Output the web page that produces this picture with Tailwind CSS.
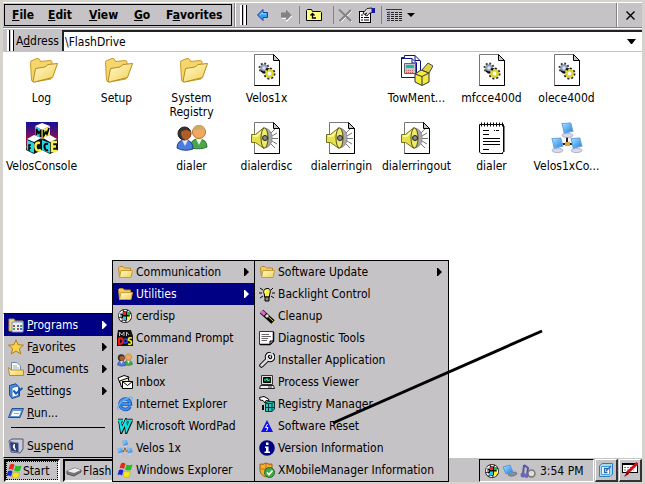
<!DOCTYPE html>
<html lang="en">
<head>
<meta charset="utf-8">
<title>\FlashDrive</title>
<script src="https://cdn.jsdelivr.net/npm/@tailwindcss/browser@4"></script>
</head>
<body class="h-screen overflow-hidden bg-[#d6d3ce] font-['DejaVu_Sans_Condensed','DejaVu_Sans',sans-serif] text-[12px] leading-[14px] text-black">

<svg class="absolute size-0" aria-hidden="true">
  <defs>
    <linearGradient id="gFold" x1="0" y1="0" x2="1" y2="1"><stop offset="0" stop-color="#fffbd0"/><stop offset="1" stop-color="#f3cf52"/></linearGradient>
    <linearGradient id="gScr" x1="0" y1="0" x2="1" y2="1"><stop offset="0" stop-color="#a8e4ff"/><stop offset="1" stop-color="#1f7ae0"/></linearGradient>
    <linearGradient id="gSky" x1="0" y1="0" x2="0" y2="1"><stop offset="0" stop-color="#10109c"/><stop offset="1" stop-color="#c0102c"/></linearGradient>
    <symbol id="folder" viewBox="0 0 32 32">
      <path d="M4.500 8.500Q4.500 6.500 6 6.500L11 4.500Q13 4 14 6L14.500 7.500L24 6.500Q26 6.500 26 8.500V11L25 25L8 28Q6 28 5.500 26Z" fill="#f4d66c" stroke="#c99a28"/>
      <path d="M7 27.500L9.500 14.500L19 13L22 10.500L31.500 9.500L26.500 23.500L8.500 28Z" fill="url(#gFold)" stroke="#b98a1c"/>
    </symbol>
    <symbol id="sfolder" viewBox="0 0 16 16">
      <path d="M1.500 3.500L2.500 2.500H6L7.500 4H13.500V13.500H2.500Z" fill="#f0cd62" stroke="#b98a28"/>
      <path d="M2.500 13.500L4 6.500H15.500L14 13.500Z" fill="url(#gFold)" stroke="#c89c38"/>
    </symbol>
    <symbol id="page" viewBox="0 0 32 32">
      <path d="M3.500 .5H22.500L28.500 6.500V31.500H3.500Z" fill="#fff" stroke="#777"/>
      <path d="M28.500 6.500V31.500H3.500" fill="none" stroke="#000"/>
      <path d="M22.500 .5V6.500H28.500Z" fill="#c8c8c8" stroke="#000"/>
    </symbol>
    <symbol id="gears" viewBox="0 0 32 32">
      <use href="#page"/>
      <circle cx="13" cy="14" r="4" fill="#dfe6f2" stroke="#333" stroke-width="3" stroke-dasharray="1.600 1.500"/>
      <circle cx="13" cy="14" r="2.800" fill="#dde4f4" stroke="#8f9cb4" stroke-width="2"/>
      <circle cx="18.500" cy="19.500" r="4.500" fill="#f1ea50" stroke="#222" stroke-width="3" stroke-dasharray="1.800 1.700"/>
      <circle cx="18.500" cy="19.500" r="3.200" fill="#fff" stroke="#ded42c" stroke-width="2.500"/>
      <path d="M10 17L14 19M15 15L17 16" stroke="#111" stroke-width="1.500"/>
    </symbol>
    <symbol id="sound" viewBox="0 0 32 32">
      <use href="#page"/>
      <path d="M20 11L24 7M21 14L26 11M21 16.500H27M21 19L26 22M20 22L24 26" stroke="#777"/>
      <path d="M14 6Q21 8 21 16T14 26Q17 22 17 16T14 6" fill="#aaa" stroke="#888"/>
      <path d="M.5 12.500H4.500L13 5.500V26.500L4.500 20.500H.5Z" fill="#e6e04a" stroke="#77731a"/>
      <path d="M2 14H6L11 9" fill="none" stroke="#fffcb8" stroke-width="1.500"/>
      <ellipse cx="13.500" cy="16" rx="3.500" ry="10" fill="#efe970" stroke="#55521a"/>
      <circle cx="14" cy="16" r="2.500" fill="#888" stroke="#222"/>
    </symbol>
    <symbol id="people" viewBox="0 0 32 32">
      <path d="M15 26Q14 17 22 17Q31 17 31 25Q25 28 15 26Z" fill="#4ca64a" stroke="#2b7430"/>
      <path d="M20 17L23 23L26 17Z" fill="#e8f4e8"/>
      <circle cx="23" cy="10" r="6.500" fill="#f0a860" stroke="#b8742c"/>
      <path d="M16.500 9Q17 3 23 3T29.500 9Q25 5 16.500 9Z" fill="#d0aa62"/>
      <path d="M1 26Q1 18 9 18T17 27Q8 30 1 26Z" fill="#4b7ddf" stroke="#243f94"/>
      <path d="M6 18L9 24L12 18Z" fill="#e3ecfa"/>
      <circle cx="8.500" cy="11.500" r="6.500" fill="#39322f" stroke="#1e1c20"/>
      <path d="M5 10Q10 6 15 10Q15 18 10 18Q5 17 5 10Z" fill="#b05c26"/>
    </symbol>
    <symbol id="mon" viewBox="0 0 12 14">
      <ellipse cx="6" cy="12" rx="5" ry="2" fill="#d8d8ea" stroke="#8f92b4" stroke-width=".6"/>
      <path d="M1 1L9 .5L11 8L3 10Z" fill="url(#gScr)" stroke="#6aa4dc"/>
    </symbol>
    <symbol id="net" viewBox="0 0 32 32">
      <path d="M16 14V22M9 22H24" stroke="#222" stroke-width="2"/>
      <rect x="14" y="20" width="5" height="4" fill="#e3a238"/>
      <use href="#mon" x="10" y="0" width="13" height="16"/>
      <use href="#mon" x="0" y="15" width="13" height="16"/>
      <use href="#mon" x="19" y="15" width="13" height="16"/>
    </symbol>
    <symbol id="ce" viewBox="0 0 16 16">
      <circle cx="8" cy="8" r="7" fill="#111"/>
      <circle cx="8" cy="8" r="5.500" fill="none" stroke="#f4f4f4" stroke-width="1.500" stroke-dasharray="3 1"/>
      <path d="M2 5H6M2 8H5M3 11H6" stroke="#fff"/>
      <path d="M6 4H9V7H6Z" fill="#e22"/><path d="M10 4H13V7H10Z" fill="#2b3"/><path d="M6 8.500H9V12H6Z" fill="#2ce"/><path d="M10 8.500H13V12H10Z" fill="#fe2"/>
    </symbol>
    <symbol id="flag" viewBox="0 0 16 16">
      <path d="M4 1.500Q7 0 8.500 2L7 7Q5 5.500 2.500 6.500Z" fill="#e8291c"/>
      <path d="M9.500 2.500Q12 4 15.500 2.500L14 8Q11 9 8 7.500Z" fill="#24c01e"/>
      <path d="M2 8Q5 7 6.500 8.500L5 13.500Q3 12 .5 13Z" fill="#1a27d8"/>
      <path d="M7.500 9Q10 10.500 13.500 9.500L12 15Q9 16 6 14Z" fill="#f6e81a" stroke="#a49a10" stroke-width=".4"/>
    </symbol>
    <symbol id="caret" viewBox="0 0 5 8"><path d="M0 0H1L5 4L1 8H0Z" fill="currentColor"/></symbol>
    <symbol id="down" viewBox="0 0 8 4"><path d="M0 0H8L4 4Z" fill="#000"/></symbol>
  </defs>
</svg>

<div class="relative flex h-full flex-col pt-[2px] pr-[3px] pb-[2px] pl-[3px]">

  <header class="shrink-0 bg-[#c6c3c6]">
    <div class="flex h-[26px] items-stretch border-t border-b border-t-white border-b-[#848284]">
      <nav class="my-px ml-px flex w-[228px] items-center border border-black pl-[3px] text-[12px] font-bold" aria-label="Menu bar">
        <button class="w-[36px] pl-[4px] text-left"><u>F</u>ile</button>
        <button class="w-[41px] pl-[4px] text-left"><u>E</u>dit</button>
        <button class="w-[45px] pl-[4px] text-left"><u>V</u>iew</button>
        <button class="w-[32px] pl-[4px] text-left"><u>G</u>o</button>
        <button class="w-[65px] pl-[4px] text-left">F<u>a</u>vorites</button>
      </nav>
      <div class="ml-[2px] w-[2px] border-r border-l border-r-white border-l-[#848284]"></div>
      <div class="my-[2px] ml-[4px] flex gap-px" aria-hidden="true">
        <i class="w-[3px] border-r border-black bg-white"></i><i class="w-[3px] border-r border-black bg-white"></i>
      </div>
      <div class="flex items-center pl-[4px]">
        <button class="grid w-[23px] place-items-center" aria-label="Back">
          <svg class="size-[14px]" viewBox="0 0 14 14"><path d="M1.500 7L7 1.500V4.500H11.500V9.500H7V12.500Z" fill="#31a2f0" stroke="#1c3fae"/><path d="M4 7L6.500 4.500V6H10" fill="none" stroke="#8edaff"/></svg>
        </button>
        <button class="grid w-[23px] place-items-center" aria-label="Forward">
          <svg class="size-[14px]" viewBox="0 0 14 14"><path d="M13 8L7.500 13.500V10.500H3" fill="none" stroke="#fff"/><path d="M12.500 7L7 1.500V4.500H2V9.500H7V12.500Z" fill="#848284"/></svg>
        </button>
        <i class="mx-[2px] h-[18px] w-px bg-[#848284]"></i>
        <button class="grid w-[23px] place-items-center" aria-label="Up one level">
          <svg class="h-[14px] w-[16px]" viewBox="0 0 16 14"><path d="M.5 12.500V2.500L1.500 1.500H5.500L6.500 3.500H14.500L15.500 4.500V12.500Z" fill="#ffff84" stroke="#000"/><path d="M10 10H6.500V6M4.500 7.500L6.500 5.500L8.500 7.500" fill="none" stroke="#000" stroke-width="1.300"/></svg>
        </button>
        <i class="mr-px ml-[8px] h-[18px] w-px bg-[#848284]"></i>
        <button class="grid w-[21px] place-items-center" aria-label="Delete">
          <svg class="size-[15px]" viewBox="0 0 15 15"><path d="M2 3L14 14M3 14L14 3" stroke="#fff"/><path d="M1 1.500L13 13M1.500 13L13 2" stroke="#848284" stroke-width="1.800"/></svg>
        </button>
        <button class="grid w-[21px] place-items-center" aria-label="Properties">
          <svg class="size-[16px]" viewBox="0 0 16 16"><rect x=".5" y="4.500" width="11" height="11" fill="#fff" stroke="#000"/><path d="M2 10.500H4M5 10.500H10M2 13H4M5 13H10M2 8H4" stroke="#000"/><path d="M4 6L8 1.500L13 1V5.500L10 6.500L8 9L6 8L8 6L5 7.500Z" fill="#d8d8d8" stroke="#222"/><path d="M13 1H16V6H13Z" fill="#1818a8"/></svg>
        </button>
        <i class="mx-[4px] h-[18px] w-px bg-[#848284]"></i>
        <button class="flex items-center gap-[4px]" aria-label="View style">
          <svg class="h-[14px] w-[17px]" viewBox="0 0 17 14"><path d="M0 1.500H16" stroke="#2a2a94"/><path d="M1 4.500H16M1 6.500H16M1 8.500H16M1 10.500H16M1 12.500H16" stroke="#222" stroke-dasharray="3 1"/><path d="M3 3V13" stroke="#6a6aae"/></svg>
          <svg class="h-[4px] w-[8px]"><use href="#down"/></svg>
        </button>
      </div>
      <button class="ml-auto grid w-[25px] place-items-center border-l border-white shadow-[-1px_0_0_#848284]" aria-label="Close">
        <svg class="size-[9px]" viewBox="0 0 9 9"><path d="M.5 .5L8.500 8.500M8.500 .5L.5 8.500" stroke="#000" stroke-width="1.400"/></svg>
      </button>
    </div>
    <div class="flex h-[23px] items-stretch border-t border-white pt-px">
      <div class="ml-[4px] flex gap-px" aria-hidden="true">
        <i class="w-[3px] border-r border-black bg-white"></i><i class="w-[3px] border-r border-black bg-white"></i>
      </div>
      <label for="address" class="flex w-[48px] items-center pl-[2px]"><span>A<u>d</u>dress</span></label>
      <div class="flex flex-1 border-t-2 border-l-2 border-[#222] bg-white">
        <input id="address" type="text" value="\FlashDrive" class="min-w-0 flex-1 bg-white pl-px outline-none">
        <button class="grid w-[22px] place-items-center" aria-label="Address history"><svg class="h-[5px] w-[9px]" viewBox="0 0 9 5"><path d="M0 0H9L5 5H4Z" fill="#000"/></svg></button>
      </div>
    </div>
    <div class="h-px bg-[#c6c3c6]"></div>
  </header>

  <main class="grid min-h-0 flex-1 auto-rows-[68px] grid-cols-[repeat(auto-fill,75px)] content-start bg-white pt-[2px] pl-px">
    <a href="#" class="flex flex-col items-center gap-[5px] text-center"><svg class="size-8 shrink-0"><use href="#folder"/></svg>Log</a>
    <a href="#" class="flex flex-col items-center gap-[5px] text-center"><svg class="size-8 shrink-0"><use href="#folder"/></svg>Setup</a>
    <a href="#" class="flex flex-col items-center gap-[5px] text-center"><svg class="size-8 shrink-0"><use href="#folder"/></svg><span>System<br>Registry</span></a>
    <a href="#" class="flex flex-col items-center gap-[5px] text-center"><svg class="size-8 shrink-0"><use href="#gears"/></svg>Velos1x</a>
    <a href="#" class="col-start-6 flex flex-col items-center gap-[5px] text-center">
      <svg class="size-8 shrink-0" viewBox="0 0 32 32"><path d="M3.500 1.500H14L19.500 7V23.500H0.500V3.500H3.500Z" fill="#fff" stroke="#10108c"/><path d="M.5 4.500H11L15.500 9V23.500M11 4.500V9H15.500M14 1.500V6.500H19" fill="none" stroke="#10108c"/><path d="M3.500 9.500H14.500V19.500H3.500Z" fill="#c8c8c8" stroke="#666"/><path d="M5 11H13V14H5Z" fill="#18b8b0"/><path d="M5 16.500H13M5 18.500H13" stroke="#c66" stroke-dasharray="1 1"/><path d="M14 20L20 16L28 19V28L21 31.500L14 28Z" fill="#f2ea3c" stroke="#333"/><path d="M14 20L21 22.500V31M21 22.500L28 19" fill="none" stroke="#333"/><path d="M21 16L27 9L32 12L28 19Z" fill="#dcd440" stroke="#444"/></svg>TowMent...</a>
    <a href="#" class="flex flex-col items-center gap-[5px] text-center"><svg class="size-8 shrink-0"><use href="#gears"/></svg>mfcce400d</a>
    <a href="#" class="flex flex-col items-center gap-[5px] text-center"><svg class="size-8 shrink-0"><use href="#gears"/></svg>olece400d</a>
    <a href="#" class="col-start-1 flex flex-col items-center gap-[5px] text-center">
      <svg class="size-8 shrink-0" viewBox="0 0 32 32"><path d="M0 0H32V24H0Z" fill="url(#gSky)"/><path d="M1 19L9 14L16 18L24 14L32 19V28L24 32L16 28L8 32L0 28Z" fill="#111"/><path d="M9 4L16 1L24 4L16 8Z" fill="#fff"/><path d="M9 4L16 8V17L9 13Z" fill="#20d8e8"/><path d="M24 4L16 8V17L24 13Z" fill="#f6f04c"/><path d="M10.500 13V7L12.500 11L14.500 9V15M17.500 8V14L20 10L21 12L23 6" fill="none" stroke="#000" stroke-width="1.700"/><path d="M1 17L8 13L15 16L8 20ZM17 16L24 13L31 17L24 20Z" fill="#fff"/><path d="M1 18L8 21V31L1 28Z" fill="#20d8e8"/><path d="M16 18L24 21V31L16 28Z" fill="#20d8e8"/><path d="M5 23H3V29M3 26H5" fill="none" stroke="#000" stroke-width="1.500"/><path d="M14 21Q9 20 9.500 25T15 28" fill="none" stroke="#f6f04c" stroke-width="2.500"/><path d="M22 22Q18 21 18.500 25T22 28" fill="none" stroke="#000" stroke-width="2"/><path d="M31 20H26V29H31M26 24.500H30" fill="none" stroke="#f6f04c" stroke-width="2.500"/></svg>VelosConsole</a>
    <a href="#" class="col-start-3 flex flex-col items-center gap-[5px] text-center"><svg class="size-8 shrink-0"><use href="#people"/></svg>dialer</a>
    <a href="#" class="flex flex-col items-center gap-[5px] text-center"><svg class="size-8 shrink-0"><use href="#sound"/></svg>dialerdisc</a>
    <a href="#" class="flex flex-col items-center gap-[5px] text-center"><svg class="size-8 shrink-0"><use href="#sound"/></svg>dialerringin</a>
    <a href="#" class="flex flex-col items-center gap-[5px] text-center"><svg class="size-8 shrink-0"><use href="#sound"/></svg>dialerringout</a>
    <a href="#" class="flex flex-col items-center gap-[5px] text-center">
      <svg class="size-8 shrink-0" viewBox="0 0 32 32"><path d="M3.500 2.500H27.500V29.500L26 31.500H5L3.500 30Z" fill="#fff" stroke="#000"/><path d="M28 4V30M6 31.500H27" stroke="#000"/><path d="M5 2.500H27" stroke="#000" stroke-width="4" stroke-dasharray="1 2"/><path d="M7 8.500H13M18 8.500H19M20 8.500H23M7 12.500H13M7 16.500H24M7 19.500H24M7 22.500H24M7 27.500H13" stroke="#000"/></svg>dialer</a>
    <a href="#" class="flex flex-col items-center gap-[5px] text-center"><svg class="size-8 shrink-0"><use href="#net"/></svg>Velos1xCo...</a>
  </main>

  <footer class="flex h-[24px] shrink-0 items-stretch bg-[#c6c3c6] pt-px pl-px">
    <button class="flex w-[56px] items-center gap-px border-2 border-t-black border-r-white border-b-white border-l-black outline-1 -outline-offset-3 outline-dotted outline-black"><svg class="size-4 shrink-0"><use href="#flag"/></svg>Start</button>
    <button class="ml-[3px] flex w-[50px] items-center gap-px overflow-hidden border-2 border-r-0 border-t-black border-b-white border-l-black pl-px" title="FlashDrive">
      <svg class="size-4 shrink-0" viewBox="0 0 16 16"><path d="M1 8L9 5L15 7V9L8 13L1 11Z" fill="#777" stroke="#555"/><path d="M1 8L9 5L15 7L8 10Z" fill="#eee"/></svg><span class="min-w-0 flex-1 overflow-hidden text-left">FlashDrive</span></button>
    <div class="ml-auto flex w-[115px] items-center gap-[2px] border border-t-black border-r-white border-b-white border-l-black pl-[4px]">
      <svg class="size-4 shrink-0"><use href="#ce"/></svg>
      <svg class="size-4 shrink-0" viewBox="0 0 16 16"><path d="M6 12Q10 15 15 11L14 9L7 10Z" fill="#8c8ca0" stroke="#5c5c74" stroke-width=".6"/><path d="M1 4L8 2L11 9L4 11Z" fill="url(#gScr)" stroke="#5a9ad8"/></svg>
      <svg class="size-4 shrink-0" viewBox="0 0 16 16"><path d="M4 2L8 5L7 12M4 2L3 11" fill="none" stroke="#5858a8" stroke-width="2"/><circle cx="3" cy="12" r="2.500" fill="#6868b8"/><circle cx="11.500" cy="10.500" r="3.500" fill="#ddd" stroke="#777" stroke-width="1.500"/><circle cx="6.500" cy="13" r="2" fill="#6868b8"/></svg>
      <time class="ml-[2px]">3:54 PM</time>
    </div>
    <button class="ml-px grid w-[23px] place-items-center border-t border-r-2 border-b-2 border-l border-t-white border-r-[#333] border-b-[#333] border-l-white" aria-label="Desktop">
      <svg class="size-4" viewBox="0 0 16 16"><path d="M4 1.500H14.500V12L12 14.500H1.500V4Z" fill="#a4dcf8" stroke="#2c7cb8"/><path d="M3.500 4.500H11.500V12.500H3.500Z" fill="#fff" stroke="#4c9cd0"/><path d="M10 6.500H6.500V10.500H9.500M8 9L13 4" fill="none" stroke="#2c68a8" stroke-width="1.300"/></svg>
    </button>
    <button class="ml-px grid w-[23px] place-items-center border-t border-r-2 border-b-2 border-l border-t-white border-r-[#333] border-b-[#333] border-l-white" aria-label="Input panel">
      <svg class="size-4" viewBox="0 0 16 16"><rect x=".5" y="1.500" width="15" height="9" fill="#fff" stroke="#000"/><path d="M0 2H16" stroke="#000" stroke-width="2"/><path d="M2 5.500H14M2 8H12" stroke="#777" stroke-dasharray="2 1"/><path d="M15.500 1L5 11" stroke="#d01018" stroke-width="3"/><path d="M5.500 9L2 15L7 12Z" fill="#800810"/></svg>
    </button>
  </footer>

  <!-- Start menu -->
  <div class="absolute bottom-[26px] left-[3px] w-[110px] border border-black border-l-white bg-[#c6c3c6]" role="menu" aria-label="Start">
    <button class="flex h-[22px] w-full items-center gap-[3px] bg-[#000084] pr-[5px] pl-[4px] text-white" role="menuitem"><svg class="size-4 shrink-0" viewBox="0 0 16 16"><path d="M1 2H6L7 4H15V14H1Z" fill="#f2d884" stroke="#b8903c"/><path d="M4 5H15V15H4Z" fill="#e8f0fa" stroke="#7090b8"/><path d="M5 8H7V10H5ZM9 11H11V13H9Z" fill="#d84030"/><path d="M9 8H11V10H9ZM12 11H14V13H12Z" fill="#3870d0"/><path d="M12 8H14V10H12ZM5 11H7V13H5Z" fill="#48a048"/></svg><span><u>P</u>rograms</span><svg class="ml-auto h-[8px] w-[5px]"><use href="#caret"/></svg></button>
    <button class="flex h-[22px] w-full items-center gap-[3px] pr-[5px] pl-[4px]" role="menuitem"><svg class="size-4 shrink-0" viewBox="0 0 16 16"><path d="M8 .8L10 5.800L15.500 6.200L11.300 9.700L12.800 15L8 12L3.200 15L4.700 9.700L.5 6.200L6 5.800Z" fill="#fbd348" stroke="#b87c18"/></svg><span>F<u>a</u>vorites</span><svg class="ml-auto h-[8px] w-[5px]"><use href="#caret"/></svg></button>
    <button class="flex h-[22px] w-full items-center gap-[3px] pr-[5px] pl-[4px]" role="menuitem"><svg class="size-4 shrink-0" viewBox="0 0 16 16"><path d="M3.500 1.500H9L12.500 5V12H3.500Z" fill="#fff" stroke="#6c8cb8"/><path d="M5 5H9M5 7H11" stroke="#9ab"/><path d="M.5 6.500L3 9H15.500V14.500H1.500Z" fill="url(#gFold)" stroke="#b98a28"/></svg><span><u>D</u>ocuments</span><svg class="ml-auto h-[8px] w-[5px]"><use href="#caret"/></svg></button>
    <button class="flex h-[22px] w-full items-center gap-[3px] pr-[5px] pl-[4px]" role="menuitem"><svg class="size-4 shrink-0" viewBox="0 0 16 16"><path d="M1.500 2.500L8 .8L11.500 5V13L4 15.500L1.500 12Z" fill="#4c90dc" stroke="#1c4890"/><path d="M4 4.500L10.500 3V12.500L4 14.500Z" fill="#f4faff" stroke="#3870b8"/><path d="M5.500 7.500L8 10.500L14.500 5" fill="none" stroke="#1c58b0" stroke-width="2"/></svg><span><u>S</u>ettings</span><svg class="ml-auto h-[8px] w-[5px]"><use href="#caret"/></svg></button>
    <button class="flex h-[22px] w-full items-center gap-[3px] pr-[5px] pl-[4px]" role="menuitem"><svg class="size-4 shrink-0" viewBox="0 0 16 16"><path d="M4 3.500H15.500L12 12.500H.5Z" fill="#5c98dc" stroke="#28508c"/><path d="M5 6H13L11 11H3Z" fill="#fff"/><path d="M6 8.500H11" stroke="#88a8d0"/></svg><span><u>R</u>un...</span></button>
    <hr class="mx-[7px] mt-[3px] mb-[7px] border-black">
    <button class="flex h-[22px] w-full items-center gap-[3px] pr-[5px] pl-[4px]" role="menuitem"><svg class="size-4 shrink-0" viewBox="0 0 16 16"><path d="M1 3L4 1H15V11L12 15L3 14Z" fill="#c8ccd8" stroke="#50546c"/><path d="M1.500 3.500L10.500 5V14.500L2.500 13Z" fill="#2c3c88" stroke="#888ca0"/><path d="M6.500 6Q3.500 9 7.500 12Q5.500 9 6.500 6Z" fill="#fff" stroke="#fff"/></svg><span>S<u>u</u>spend</span></button>
  </div>

  <!-- Programs -->
  <div class="absolute bottom-[2px] left-[112px] w-[143px] border border-black bg-[#c6c3c6]" role="menu" aria-label="Programs">
    <button class="flex h-[22px] w-full items-center gap-[3px] pr-[5px] pl-[4px]" role="menuitem"><svg class="size-4 shrink-0"><use href="#sfolder"/></svg>Communication<svg class="ml-auto h-[8px] w-[5px]"><use href="#caret"/></svg></button>
    <button class="flex h-[22px] w-full items-center gap-[3px] bg-[#000084] pr-[5px] pl-[4px] text-white" role="menuitem"><svg class="size-4 shrink-0"><use href="#sfolder"/></svg>Utilities<svg class="ml-auto h-[8px] w-[5px]"><use href="#caret"/></svg></button>
    <button class="flex h-[22px] w-full items-center gap-[3px] pl-[4px]" role="menuitem"><svg class="size-4 shrink-0"><use href="#ce"/></svg>cerdisp</button>
    <button class="flex h-[22px] w-full items-center gap-[3px] pl-[4px]" role="menuitem"><svg class="size-4 shrink-0" viewBox="0 0 16 16"><path d="M1 0H14L16 6V16H0V6Z" fill="#111"/><path d="M2.500 6V2L5 5L7 2V6M9.500 6V2L12 5" fill="none" stroke="#bbb"/><path d="M2 8V14Q6 14 6 11T2 8" fill="none" stroke="#f01818" stroke-width="2"/><circle cx="8.500" cy="11" r="2" fill="none" stroke="#2848f0" stroke-width="1.500"/><path d="M15 8Q11 7 11.500 10Q15 11 14.500 13T11 14" fill="none" stroke="#f4ec28" stroke-width="1.600"/></svg>Command Prompt</button>
    <button class="flex h-[22px] w-full items-center gap-[3px] pl-[4px]" role="menuitem"><svg class="size-4 shrink-0"><use href="#people"/></svg>Dialer</button>
    <button class="flex h-[22px] w-full items-center gap-[3px] pl-[4px]" role="menuitem"><svg class="size-4 shrink-0" viewBox="0 0 16 16"><path d="M1 4L7 1.500L12 3L10 8L3 9Z" fill="#fff" stroke="#000"/><path d="M2.500 7L11 4L13 10L4.500 13Z" fill="#f4ecb8" stroke="#000"/><path d="M5.500 7.500H15.500V14.500H5.500Z" fill="#fff" stroke="#000"/><path d="M5.500 7.500L10.500 11.500L15.500 7.500" fill="none" stroke="#000"/></svg>Inbox</button>
    <button class="flex h-[22px] w-full items-center gap-[3px] pl-[4px]" role="menuitem"><svg class="size-4 shrink-0" viewBox="0 0 16 16"><path d="M13 10.500A5.300 5.300 0 1 1 13.500 8H5" fill="none" stroke="#1c50b8" stroke-width="3.400"/><path d="M12.800 10.500A5.300 5.300 0 1 1 13.300 8H5" fill="none" stroke="#3c90ec" stroke-width="2"/><path d="M1 14Q-1 10 6 5T15 1.500Q16 3 14 5" fill="none" stroke="#68b8f4" stroke-width="1.300"/></svg>Internet Explorer</button>
    <button class="flex h-[22px] w-full items-center gap-[3px] pl-[4px]" role="menuitem"><svg class="size-4 shrink-0" viewBox="0 0 16 16"><path d="M1 2.500H6M9.500 2.500H15.500M3 3L4.500 13L8.500 4L9.500 13L14 3" fill="none" stroke="#000" stroke-width="3.500"/><path d="M1 2.500H6M9.500 2.500H15M3 3L4.500 12L8.500 4L9.500 12L13.500 3" fill="none" stroke="#10e0e0" stroke-width="2.200"/></svg>Microsoft WordPad</button>
    <button class="flex h-[22px] w-full items-center gap-[3px] pl-[4px]" role="menuitem"><svg class="size-4 shrink-0"><use href="#net"/></svg>Velos 1x</button>
    <button class="flex h-[22px] w-full items-center gap-[3px] pl-[4px]" role="menuitem"><svg class="size-4 shrink-0"><use href="#flag"/></svg>Windows Explorer</button>
  </div>

  <!-- Utilities -->
  <div class="absolute bottom-[2px] left-[254px] w-[195px] border border-black bg-[#c6c3c6]" role="menu" aria-label="Utilities">
    <button class="flex h-[22px] w-full items-center gap-[3px] pr-[6px] pl-[4px]" role="menuitem"><svg class="size-4 shrink-0"><use href="#sfolder"/></svg>Software Update<svg class="ml-auto h-[8px] w-[5px]"><use href="#caret"/></svg></button>
    <button class="flex h-[22px] w-full items-center gap-[3px] pl-[4px]" role="menuitem"><svg class="size-4 shrink-0" viewBox="0 0 16 16"><path d="M1 2L4 4M0 7H3M1 12L4 10M14 2L12 4M16 7H13M15 12L12 10" stroke="#000"/><path d="M5.500 9Q3 3 8 2.500T10.500 9V11H5.500Z" fill="#f8f04c" stroke="#000"/><path d="M6 11H10V15H6Z" fill="#888" stroke="#000"/><path d="M6.500 4.500L6 7" stroke="#fff"/></svg>Backlight Control</button>
    <button class="flex h-[22px] w-full items-center gap-[3px] pl-[4px]" role="menuitem"><svg class="size-4 shrink-0" viewBox="0 0 16 16"><path d="M2.500 3.500L14 14" stroke="#000" stroke-width="5"/><path d="M2 3L6 6.500" stroke="#d070c8" stroke-width="3.500"/><path d="M7 7L9 9" stroke="#ddd" stroke-width="3"/><path d="M9.500 9L14 13" stroke="#e8d048"/></svg>Cleanup</button>
    <button class="flex h-[22px] w-full items-center gap-[3px] pl-[4px]" role="menuitem"><svg class="size-4 shrink-0" viewBox="0 0 16 16"><path d="M.5 1.500H14.500V11L11 14.500H.5Z" fill="#fff" stroke="#333"/><path d="M14.500 2V11L11 14.500H1" fill="none" stroke="#000" stroke-width="1.500"/><path d="M11 14V11H14" fill="#bbb" stroke="#000"/><path d="M2.500 4.500H10M2.500 6.500H12M2.500 8.500H9M2.500 10.500H8" stroke="#666"/></svg>Diagnostic Tools</button>
    <button class="flex h-[22px] w-full items-center gap-[3px] pl-[4px]" role="menuitem"><svg class="size-4 shrink-0" viewBox="0 0 16 16"><path d="M2.500 13.500L9 7" stroke="#000" stroke-width="4.500" stroke-linecap="round"/><circle cx="11" cy="5" r="3.300" fill="none" stroke="#000" stroke-width="4"/><circle cx="11" cy="5" r="3.300" fill="none" stroke="#eee" stroke-width="2"/><path d="M2.500 13.500L9 7" stroke="#ddd" stroke-width="2.500" stroke-linecap="round"/><path d="M11 5L15 0L12 0Z" fill="#c6c3c6"/></svg>Installer Application</button>
    <button class="flex h-[22px] w-full items-center gap-[3px] pl-[4px]" role="menuitem"><svg class="size-4 shrink-0" viewBox="0 0 16 16"><path d="M2.500 1.500H13.500V10.500H2.500Z" fill="#ddd" stroke="#333"/><path d="M4.500 3.500H11.500V8.500H4.500Z" fill="#043c2c" stroke="#000"/><path d="M5 6H7L8 4.500L9 7L10 6H11" fill="none" stroke="#40e890"/><path d="M1.500 11.500H14.500L15.500 14.500H.5Z" fill="#eee" stroke="#222"/><path d="M9 13H13" stroke="#444"/></svg>Process Viewer</button>
    <button class="flex h-[22px] w-full items-center gap-[3px] pl-[4px]" role="menuitem"><svg class="size-4 shrink-0" viewBox="0 0 16 16"><path d="M.5 1.500L5 .5L9.500 3L10 5L7 4.500L6 7L4 4.500L1 4Z" fill="#fff" stroke="#000"/><path d="M6.500 7.500L9 5.500H15.500V13L13 15.500H6.500Z" fill="#28c8c0" stroke="#003838"/><path d="M6.500 7.500H13V15.500M13 7.500L15.500 5.500M6.500 11.500H15M9.500 7V15" fill="none" stroke="#003838"/><path d="M4 9V14" stroke="#000" stroke-width="2"/></svg>Registry Manager</button>
    <button class="flex h-[22px] w-full items-center gap-[3px] pl-[4px]" role="menuitem"><svg class="size-4 shrink-0" viewBox="0 0 16 16"><path d="M8 2L14 14H2Z" fill="#1010e8"/><path d="M8.500 6L6.500 9.500H9L7.500 13" fill="none" stroke="#fff"/></svg>Software Reset</button>
    <button class="flex h-[22px] w-full items-center gap-[3px] pl-[4px]" role="menuitem"><svg class="size-4 shrink-0" viewBox="0 0 16 16"><circle cx="8" cy="8" r="7.800" fill="#000084"/><path d="M7 2.500H9.500V5H7ZM6 6.500H9.500V11.500H11V13H5.500V11.500H7V8H6Z" fill="#fff"/></svg>Version Information</button>
    <button class="flex h-[22px] w-full items-center gap-[3px] pl-[4px]" role="menuitem"><svg class="size-4 shrink-0" viewBox="0 0 16 16"><path d="M1 2Q4 3 7 1Q10 3 13 2V8Q12 13 7 15Q1 13 1 8Z" fill="#f0b030" stroke="#a05c10"/><path d="M7 2V14M2 7H12" stroke="#d86818"/><circle cx="10.500" cy="10.500" r="5" fill="#48a848" stroke="#1c6c28"/><path d="M8 10.500L10 12.500L13.500 8.500" fill="none" stroke="#fff" stroke-width="1.700"/></svg>XMobileManager Information</button>
  </div>

  <!-- Callout line to Software Reset -->
  <svg class="pointer-events-none absolute bottom-[58px] left-[331px] h-[98px] w-[214px]" viewBox="0 0 214 98"><path d="M2 95L211 3" stroke="#000" stroke-width="3"/></svg>
</div>
</body>
</html>
